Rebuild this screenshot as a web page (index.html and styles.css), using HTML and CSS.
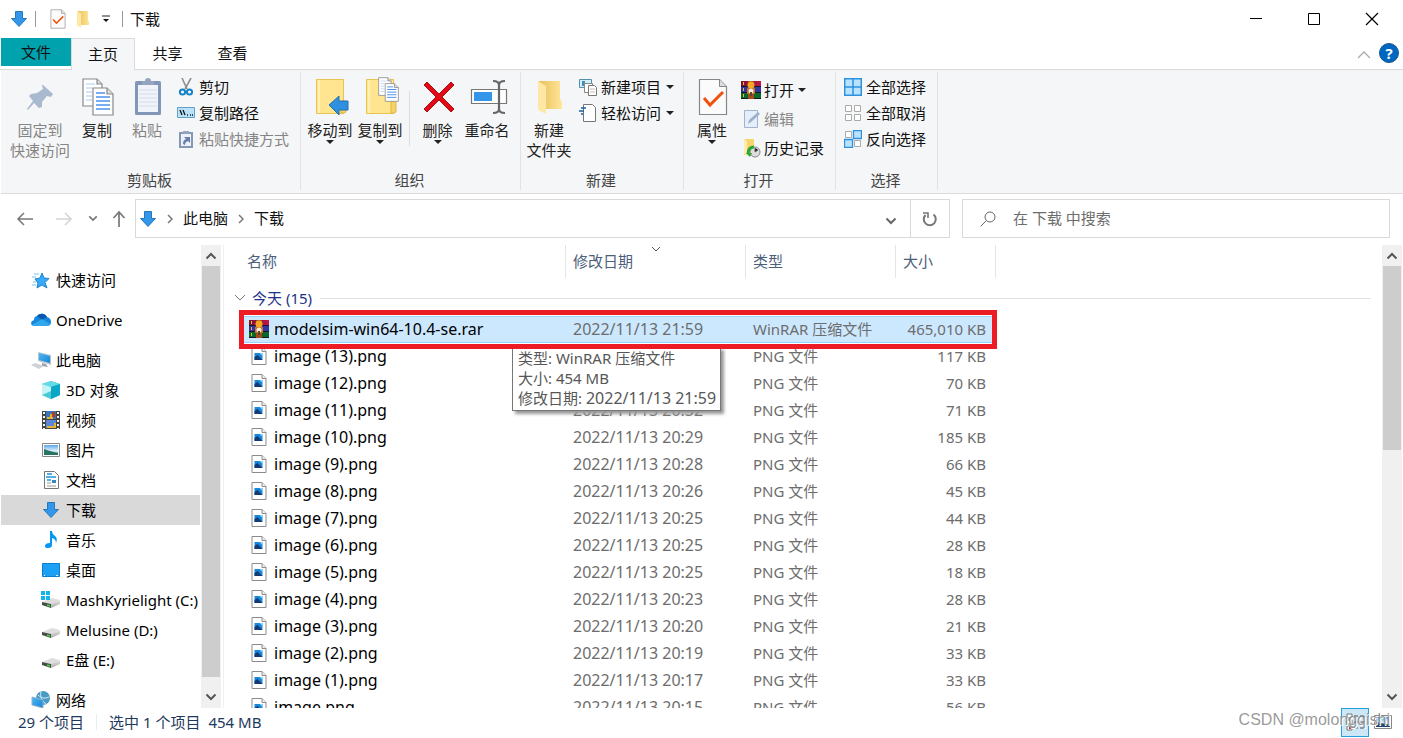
FILE: index.html
```html
<!DOCTYPE html>
<html lang="zh-CN">
<head>
<meta charset="utf-8">
<title>下载</title>
<link rel="stylesheet" href="styles.css">
</head>
<body>
<svg class="defs" aria-hidden="true">
  <defs>
    <linearGradient id="gold" x1="0" x2="1"><stop offset="0" stop-color="#e8c05a"/><stop offset="1" stop-color="#ffe699"/></linearGradient>
    <linearGradient id="sky" x1="0" y1="0" x2="1" y2="1"><stop offset="0" stop-color="#4db8f5"/><stop offset="1" stop-color="#1583d8"/></linearGradient>
    <linearGradient id="photo" x1="0" y1="0" x2="0" y2="1"><stop offset="0" stop-color="#5aa5e8"/><stop offset=".6" stop-color="#e3f3fc"/><stop offset="1" stop-color="#2f6f9a"/></linearGradient>
    <linearGradient id="metal" x1="0" x2="0" y1="0" y2="1"><stop offset="0" stop-color="#e5e5e5"/><stop offset="1" stop-color="#a9a9a9"/></linearGradient>
    <linearGradient id="red" x1="0" x2="1"><stop offset="0" stop-color="#7d1230"/><stop offset="1" stop-color="#c01848"/></linearGradient>
  </defs>
  <symbol id="down" viewBox="0 0 18 18"><path d="M5.500 1.500h7v7h4L9 16.500 1.500 8.500h4z" fill="#3396e8" stroke="#2277bd"/></symbol>
  <symbol id="check" viewBox="0 0 30 38"><path d="M1.500 1.500h20l7 7v28h-27z" fill="#fbfbfb" stroke="#878787" stroke-width="1.200"/><path d="M21.500 1.500v7h7" fill="#ddd" stroke="#878787"/><path d="M6 20l6 7L25 14" fill="none" stroke="#f2500d" stroke-width="3"/></symbol>
  <symbol id="folder" viewBox="0 0 26 36"><path d="M2 2h21v18l2 3v7H8z" fill="url(#gold)"/><path d="M1 2l8 5v28l-8-4z" fill="#ffe8a6"/></symbol>
  <symbol id="box" viewBox="0 0 34 38"><path d="M1.500 1.500h27v34h-27z" fill="#ffe590" stroke="#e7c34f"/><path d="M4 2v33" stroke="#fff3c2" stroke-width="1.500"/><path d="M26 35V24q2.500-3 5 0v9q0 2-2 2z" fill="#f6d26a" stroke="#dfb53e"/></symbol>
  <symbol id="pages" viewBox="0 0 32 38"><g fill="#fff" stroke="#888" stroke-width="1.200"><path d="M1 1h14l5 5v22H1z"/><path d="M11 10h14l6 6v21H11z"/><path d="M15 1v5h5M25 10v6h6" fill="#ddd"/></g><path d="M4 6h9M4 10h6M4 14h6M4 18h6M4 22h6" stroke="#a8c8f5"/><path d="M14 15h9M14 19h14M14 23h14M14 27h14M14 31h14" stroke="#4d91ee" stroke-width="1.500"/></symbol>
  <symbol id="clip" viewBox="0 0 28 38"><rect x="1" y="3" width="26" height="34" rx="1.500" fill="#8296b8"/><path d="M4 7h20v27H4z" fill="#f0f4fa"/><path d="M8 3h3a3 3 0 016 0h3v4H8z" fill="#95a5c0"/><path d="M5 12h18M5 16h18M5 20h18M5 24h18M5 28h18" stroke="#d3ddeb"/></symbol>
  <symbol id="rar" viewBox="0 0 20 18"><path d="M0 0h20v6H0z" fill="url(#red)"/><path d="M0 6h20v6H0z" fill="#3037a0"/><path d="M0 12h20v6H0z" fill="#0a672a"/><path d="M0 5.500h20M0 11.500h20M0 17.500h20" stroke="#1c1728"/><path d="M2.500 1v3M2.500 7v3M2.500 13v3" stroke="#f5b92e"/><path d="M7 0h6v18H7z" fill="#a34c19"/><circle cx="10" cy="4" r="3.500" fill="#f5a623"/><path d="M6 7h8v6H6z" fill="#c5732c"/><circle cx="10" cy="10" r="2.500" fill="#f5ecd7"/><path d="M9 11h2v4H9z" fill="#5d422e"/></symbol>
  <symbol id="png" viewBox="0 0 15 18"><path d="M.5.500h10l4 4v13H.500z" fill="#fff" stroke="#8b8b8b"/><path d="M10.500.500v4h4" fill="#eee" stroke="#8b8b8b"/><path d="M3 6h8v7H3z" fill="#1787dc"/><path d="M3 10l3-2 5 5H3z" fill="#123b72"/><path d="M8 6h3v3z" fill="#8bd5fa"/></symbol>
  <symbol id="drive" viewBox="0 0 20 20"><path d="M1 12l10-4 8 2-9 4z" fill="#dedede"/><path d="M1 12l9 2v4l-9-3z" fill="#494949"/><path d="M10 14l9-4v4l-9 4z" fill="url(#metal)"/><path d="M6 15l3 1" stroke="#35e335" stroke-width="1.500"/></symbol>
  <symbol id="up" viewBox="0 0 12 8"><path d="M1.500 6.500L6 2l4.500 4.500" fill="none" stroke="currentColor" stroke-width="2"/></symbol>
  <symbol id="dn" viewBox="0 0 12 8"><path d="M1.500 1.500L6 6l4.500-4.500" fill="none" stroke="currentColor" stroke-width="2"/></symbol>
</svg>

<header class="titlebar">
  <svg class="i18"><use href="#down"/></svg><i class="bar"></i>
  <button class="quick" aria-label="属性"><svg width="16" height="20"><use href="#check"/></svg></button>
  <button class="quick" aria-label="新建文件夹"><svg width="14" height="18"><use href="#folder"/></svg></button>
  <button class="quick" aria-label="自定义快速访问工具栏"><svg width="8" height="8" viewBox="0 0 8 8"><path d="M0 1h8" stroke="#222"/><path d="M1 4h6L4 7z" fill="#111"/></svg></button>
  <i class="bar"></i><h1>下载</h1>
  <div class="window-buttons">
    <button aria-label="最小化"><svg width="14" height="14" viewBox="0 0 14 14"><path d="M1 6.500h12" stroke="#000"/></svg></button>
    <button aria-label="最大化"><svg width="14" height="14" viewBox="0 0 14 14"><path d="M1.500 1.500h11v11h-11z" fill="none" stroke="#000"/></svg></button>
    <button aria-label="关闭"><svg width="14" height="14" viewBox="0 0 14 14"><path d="M1 1l12 12M13 1L1 13" stroke="#000" stroke-width="1.200"/></svg></button>
  </div>
</header>
<nav class="tabs">
  <button class="tab file">文件</button><button class="tab active">主页</button><button class="tab">共享</button><button class="tab">查看</button>
  <div class="help">
    <button aria-label="折叠功能区"><svg width="14" height="9" viewBox="0 0 14 9"><path d="M1 8l6-6 6 6" fill="none" stroke="#aaa" stroke-width="1.300"/></svg></button>
    <button class="question">?</button>
  </div>
</nav>
<section class="ribbon">
  <div class="group clipboard"><div class="tools">
    <button class="big pin off"><svg width="30" height="40" viewBox="0 0 30 40"><path d="M17 8l10 9-2 3-4-1-5 6v5l-3 1-5-5-6 7-1-1 6-8-4-5 2-2 6-1 6-4-1-4z" fill="#a9b9d0"/></svg><span>固定到<br>快速访问</span></button>
    <button class="big mid"><svg width="32" height="40"><use href="#pages"/></svg><span>复制</span></button>
    <button class="big mid off"><svg width="28" height="40"><use href="#clip"/></svg><span>粘贴</span></button>
    <div class="small">
      <button><svg class="i18" viewBox="0 0 18 18"><path d="M5 0l5 11M14 0L8 11" stroke="#8a8f94" stroke-width="1.600"/><circle cx="5.500" cy="14" r="2.600" fill="none" stroke="#1682c5" stroke-width="2"/><circle cx="12.500" cy="14" r="2.600" fill="none" stroke="#1682c5" stroke-width="2"/></svg>剪切</button>
      <button><svg class="i18" viewBox="0 0 18 18"><path d="M.5 3.500h17v10H.500z" fill="#b9e3fb" stroke="#649ec2"/><path d="M3 6l2 5M6 6l2 5M10 11h1M13 11h1M15 11h1" stroke="#111" stroke-width="1.300"/></svg>复制路径</button>
      <button class="off"><svg class="i18" viewBox="0 0 18 18"><path d="M3 3h12v14H3z" fill="#eef2f8" stroke="#8397b7" stroke-width="2"/><path d="M6 1h6v3H6z" fill="#95a5c0"/><path d="M6 14q0-4 3-5L7 7h6v6l-2-2q-3 1-3 4z" fill="#667fae"/></svg>粘贴快捷方式</button>
    </div></div><h2>剪贴板</h2></div>
  <div class="group organize"><div class="tools">
    <button class="big mid"><svg width="34" height="40" viewBox="0 0 34 40"><use href="#box" width="34" height="38" y="1"/><path d="M14 28l10-9v5h9v9h-9v5z" fill="#2f90df" stroke="#2170b0"/></svg><span>移动到</span><b></b></button>
    <button class="big mid"><svg width="34" height="40" viewBox="0 0 34 40"><use href="#box" width="34" height="38" y="1"/><use href="#pages" x="13" width="21" height="25"/></svg><span>复制到</span><b></b></button>
    <i class="split"></i>
    <button class="big delete"><svg width="34" height="40" viewBox="0 0 34 40"><path d="M2 8l3-3 12 12L29 5l3 3-12 12 12 12-3 3-12-12L5 35l-3-3 12-12z" fill="#e30b13" stroke="#a6131b"/></svg><span>删除</span><b></b></button>
    <button class="big mid"><svg width="38" height="40" viewBox="0 0 38 40"><path d="M1.500 12.500h35v14h-35z" fill="#fff" stroke="#777" stroke-width="1.200"/><path d="M4 15h18v9H4z" fill="#3396e8"/><path d="M23 4q6 0 6 4 0-4 6-4M29 7v26M23 36q6 0 6-4 0 4 6 4" fill="none" stroke="#666" stroke-width="2.200"/></svg><span>重命名</span></button>
  </div><h2>组织</h2></div>
  <div class="group new"><div class="tools">
    <button class="big mid"><svg width="26" height="40"><use href="#folder"/></svg><span>新建<br>文件夹</span></button>
    <div class="small"><button><svg class="i18" viewBox="0 0 18 18"><path d="M.5 1.500h12v8H.500z" fill="#d4eefa" stroke="#568fae"/><path d="M3 3h3v5H3z" fill="#448eb5"/><path d="M5.500 5.500h8v9h-8z" fill="#fff" stroke="#888"/><path d="M9.500 7.500h6l2 2v8h-8z" fill="#fff" stroke="#777"/><path d="M11 11h5M11 14h5" stroke="#d2b7b7"/></svg>新建项目<b></b></button><button><svg class="i18" viewBox="0 0 18 18"><path d="M4.500.500h9l3 3v14h-12z" fill="#fff" stroke="#777"/><path d="M2 4h5M0 7h5M2 10h2" stroke="#185f9e" stroke-width="1.300"/></svg>轻松访问<b></b></button></div>
  </div><h2>新建</h2></div>
  <div class="group open"><div class="tools">
    <button class="big mid"><svg width="30" height="40"><use href="#check"/></svg><span>属性</span><b></b></button>
    <div class="small wide"><button><svg width="20" height="18"><use href="#rar"/></svg>打开<b></b></button><button class="off"><svg width="20" height="18" viewBox="0 0 20 18"><path d="M3.500.500h13v17h-13z" fill="#e5eefb" stroke="#a1b2cd"/><path d="M7 14l1-4 9-8 2 2-9 8z" fill="#9fb0cb"/></svg>编辑</button><button><svg width="20" height="20" viewBox="0 0 20 20"><path d="M3 1h10v16H3z" fill="#f7d56e"/><path d="M3 1l3 2v15l-3-2z" fill="#ffebac"/><circle cx="14" cy="14" r="5" fill="#ddd" stroke="#888"/><path d="M14 10v4l3-2" stroke="#666"/><path d="M7 16q0-7 6-7" fill="none" stroke="#30a438" stroke-width="3"/><path d="M5 15h6l-2 4z" fill="#30a438"/></svg>历史记录</button></div>
  </div><h2>打开</h2></div>
  <div class="group select"><div class="tools"><div class="small">
    <button><svg class="i18" viewBox="0 0 18 18"><path d="M.7.700h16.600v16.600H.700zM9 0v18M0 9h18" fill="#b9e2ff" stroke="#2d91df" stroke-width="1.500"/></svg>全部选择</button>
    <button><svg class="i18" viewBox="0 0 18 18"><path d="M1.500 1.500h6v6h-6zM10.500 1.500h6v6h-6zM1.500 10.500h6v6h-6zM10.500 10.500h6v6h-6z" fill="#fff" stroke="#aaa"/></svg>全部取消</button>
    <button><svg class="i18" viewBox="0 0 18 18"><path d="M1.500 1.500h6v6h-6zM10.500 10.500h6v6h-6z" fill="#fff" stroke="#aaa"/><path d="M9.500.500h8v8h-8zM.5 9.500h8v8H.500z" fill="#b9e2ff" stroke="#2d91df" stroke-width="1.300"/></svg>反向选择</button>
  </div></div><h2>选择</h2></div>
</section>

<section class="navigation">
  <div class="arrows">
    <button class="back" aria-label="后退"><svg width="18" height="16" viewBox="0 0 18 16"><path d="M2 8h15M8 2L2 8l6 6" fill="none" stroke="#777" stroke-width="1.500"/></svg></button>
    <button class="forward" aria-label="前进"><svg width="18" height="16" viewBox="0 0 18 16"><path d="M1 8h15M10 2l6 6-6 6" fill="none" stroke="#d4d4d4" stroke-width="1.500"/></svg></button>
    <button class="recent" aria-label="最近位置"><svg width="10" height="7"><use href="#dn"/></svg></button>
    <button class="parent" aria-label="上移"><svg width="14" height="18" viewBox="0 0 14 18"><path d="M7 17V2M1.500 8L7 2l5.500 6" fill="none" stroke="#777" stroke-width="1.700"/></svg></button>
  </div>
  <div class="address">
    <svg class="i18"><use href="#down"/></svg><svg class="crumb" viewBox="0 0 6 10"><path d="M1 1l4 4-4 4" fill="none" stroke="#777" stroke-width="1.500"/></svg><a href="#pc">此电脑</a><svg class="crumb" viewBox="0 0 6 10"><path d="M1 1l4 4-4 4" fill="none" stroke="#777" stroke-width="1.500"/></svg><a href="#downloads">下载</a>
    <button class="expand" aria-label="展开地址"><svg width="12" height="8"><use href="#dn"/></svg></button>
    <button class="refresh" aria-label="刷新"><svg width="16" height="16" viewBox="0 0 16 16"><path d="M11.500 3.500A6 6 0 113.500 4" fill="none" stroke="#777" stroke-width="2"/><path d="M1 2h5v5" fill="none" stroke="#777" stroke-width="1.600"/></svg></button>
  </div>
  <label class="search"><svg width="16" height="16" viewBox="0 0 16 16"><circle cx="10" cy="6" r="5" fill="none" stroke="#666"/><path d="M6.500 9.500L.7 15.300" stroke="#666"/></svg><input type="text" placeholder="在 下载 中搜索" aria-label="在 下载 中搜索"></label>
</section>

<div class="content">
  <nav class="tree">
    <a href="#quick" class="root"><svg width="20" height="20" viewBox="0 0 20 20"><path d="M11 3l2 5 5 .5-4 4 2 5.500-5-3-5 3 1-5-3-4 5-1z" fill="#35aafb" stroke="#1b84c9"/><path d="M3 4h5M1 7h4M2 12h3M1 15h4" stroke="#76bfea"/></svg>快速访问</a>
    <a href="#onedrive" class="root"><svg width="20" height="20" viewBox="0 0 20 20"><path d="M3 10a4 4 0 013-4 6 6 0 0110 1q4 1 4 5t-4 4H4q-4 0-4-3 0-2 3-3z" fill="#1588dc"/><path d="M6 6a6 6 0 0110 1l-5 3z" fill="#0c58ac"/><path d="M1 15l10-6 8 5q-1 2-4 2H4q-2 0-3-1z" fill="#31a7ee"/></svg>OneDrive</a>
    <a href="#pc" class="root"><svg width="20" height="20" viewBox="0 0 20 20"><path d="M7 2l13 3v10L7 11z" fill="#b9c4cb"/><path d="M8 3l11 3v7L8 10z" fill="url(#sky)"/><path d="M11 13l4 1 2 3-6-1z" fill="#9aa3a9"/><path d="M0 15l4-2 9 3-5 3z" fill="#cfd3d6"/></svg>此电脑</a>
    <a href="#3d"><svg width="20" height="20" viewBox="0 0 20 20"><path d="M1 4l9-3 9 3v11l-9 4-9-4z" fill="#26b9d3"/><path d="M1 4l9-3 9 3-9 3z" fill="#64dae6"/><path d="M1 4l9 3v12l-9-4z" fill="#c6f3f6"/><path d="M1 15l9-4v8z" fill="#48cbd7"/><path d="M10 7l9-3v11l-9 4z" fill="#0aa8c6"/></svg>3D 对象</a>
    <a href="#video"><svg width="20" height="20" viewBox="0 0 20 20"><path d="M1 1h18v18H1z" fill="#444"/><path d="M5 1h10v8H5z" fill="#3875bd"/><path d="M5 10h10v8H5z" fill="#5a88d7"/><path d="M6 7h3V4h5v3h-2v2H6M6 16h7v-3h2v5H6" fill="#e6b633"/><path d="M3 2v17M17 2v17" stroke="#f4f4f4" stroke-width="2" stroke-dasharray="2 2"/><path d="M11 2h3v5h-3" fill="#b23c24"/></svg>视频</a>
    <a href="#pictures"><svg width="20" height="20" viewBox="0 0 20 20"><path d="M1.500 3.500h17v13h-17z" fill="#fff" stroke="#888"/><path d="M3 5h14v10H3z" fill="url(#photo)"/><path d="M3 9q5 2 14 4v2H3z" fill="#267463"/></svg>图片</a>
    <a href="#docs"><svg width="20" height="20" viewBox="0 0 20 20"><path d="M3.500 1.500h10l4 4v13h-14z" fill="#fff" stroke="#777"/><path d="M6 4h5M5 7h10M6 10h4" stroke="#1c97df" stroke-width="1.500"/><path d="M6 13h4M6 16h9" stroke="#999"/><path d="M11 10h4v3h-4z" fill="#3a85be"/></svg>文档</a>
    <a href="#downloads" class="current"><svg width="20" height="18"><use href="#down"/></svg>下载</a>
    <a href="#music"><svg width="20" height="20" viewBox="0 0 20 20"><path d="M9 1h2q0 3 3 5t1 7q0-4-4-5v7q0 3-4 3-3 0-3-2 0-3 5-3z" fill="#0697f3"/></svg>音乐</a>
    <a href="#desktop"><svg width="20" height="20" viewBox="0 0 20 20"><path d="M1.500 3.500h17v13h-17z" fill="#1ca0f6" stroke="#0c7ecb"/><path d="M3 15.500h1M15 15.500h2" stroke="#fff"/></svg>桌面</a>
    <a href="#c"><svg width="20" height="20"><use href="#drive"/><path d="M0 1h4v4H0zM5 1h4v4H5zM0 6h4v4H0zM5 6h4v4H5z" fill="#13b3ec"/></svg>MashKyrielight (C:)</a>
    <a href="#d"><svg width="20" height="20"><use href="#drive"/></svg>Melusine (D:)</a>
    <a href="#e"><svg width="20" height="20"><use href="#drive"/></svg>E盘 (E:)</a>
    <a href="#network" class="root"><svg width="20" height="20" viewBox="0 0 20 20"><circle cx="12" cy="8" r="7" fill="#4b9ac5"/><path d="M7 5q5 5 11 2M10 1q-2 8 5 13" stroke="#cbe9f5" fill="none"/><path d="M1 7l11 3v8L1 15z" fill="url(#sky)" stroke="#8fb1c8"/></svg>网络</a>
  </nav>
  <div class="scroll"><svg width="12" height="8"><use href="#up"/></svg><i class="tree-thumb"></i><svg width="12" height="8"><use href="#dn"/></svg></div>
  <main>
    <table>
      <colgroup><col class="c-name"><col class="c-date"><col class="c-type"><col class="c-size"><col></colgroup>
      <thead><tr><th>名称</th><th>修改日期<svg class="sort" width="10" height="6" viewBox="0 0 10 6"><path d="M1 1l4 4 4-4" fill="none" stroke="#555"/></svg></th><th>类型</th><th>大小</th><th></th></tr></thead>
      <tbody>
      <tr><th colspan="5" class="date-group"><div><svg width="12" height="8" viewBox="0 0 12 8"><path d="M1 1l5 5 5-5" fill="none" stroke="#777"/></svg>今天 (15)<i></i></div></th></tr>
      <tr class="selected"><td><svg width="20" height="18"><use href="#rar"/></svg>modelsim-win64-10.4-se.rar</td><td>2022/11/13 21:59</td><td>WinRAR 压缩文件</td><td>465,010 KB</td></tr>
      <tr><td><svg width="20" height="18"><use href="#png"/></svg>image (13).png</td><td></td><td>PNG 文件</td><td>117 KB</td></tr>
      <tr><td><svg width="20" height="18"><use href="#png"/></svg>image (12).png</td><td></td><td>PNG 文件</td><td>70 KB</td></tr>
      <tr><td><svg width="20" height="18"><use href="#png"/></svg>image (11).png</td><td>2022/11/13 20:32</td><td>PNG 文件</td><td>71 KB</td></tr>
      <tr><td><svg width="20" height="18"><use href="#png"/></svg>image (10).png</td><td>2022/11/13 20:29</td><td>PNG 文件</td><td>185 KB</td></tr>
      <tr><td><svg width="20" height="18"><use href="#png"/></svg>image (9).png</td><td>2022/11/13 20:28</td><td>PNG 文件</td><td>66 KB</td></tr>
      <tr><td><svg width="20" height="18"><use href="#png"/></svg>image (8).png</td><td>2022/11/13 20:26</td><td>PNG 文件</td><td>45 KB</td></tr>
      <tr><td><svg width="20" height="18"><use href="#png"/></svg>image (7).png</td><td>2022/11/13 20:25</td><td>PNG 文件</td><td>44 KB</td></tr>
      <tr><td><svg width="20" height="18"><use href="#png"/></svg>image (6).png</td><td>2022/11/13 20:25</td><td>PNG 文件</td><td>28 KB</td></tr>
      <tr><td><svg width="20" height="18"><use href="#png"/></svg>image (5).png</td><td>2022/11/13 20:25</td><td>PNG 文件</td><td>18 KB</td></tr>
      <tr><td><svg width="20" height="18"><use href="#png"/></svg>image (4).png</td><td>2022/11/13 20:23</td><td>PNG 文件</td><td>28 KB</td></tr>
      <tr><td><svg width="20" height="18"><use href="#png"/></svg>image (3).png</td><td>2022/11/13 20:20</td><td>PNG 文件</td><td>21 KB</td></tr>
      <tr><td><svg width="20" height="18"><use href="#png"/></svg>image (2).png</td><td>2022/11/13 20:19</td><td>PNG 文件</td><td>33 KB</td></tr>
      <tr><td><svg width="20" height="18"><use href="#png"/></svg>image (1).png</td><td>2022/11/13 20:17</td><td>PNG 文件</td><td>33 KB</td></tr>
      <tr><td><svg width="20" height="18"><use href="#png"/></svg>image.png</td><td>2022/11/13 20:15</td><td>PNG 文件</td><td>56 KB</td></tr>
      </tbody>
    </table>
    <div class="tooltip" role="tooltip"><p>类型: WinRAR 压缩文件</p><p>大小: 454 MB</p><p>修改日期: <span>2022/11/13 21:59</span></p></div>
    <div class="highlight"></div>
  </main>
  <div class="scroll"><svg width="12" height="8"><use href="#up"/></svg><i class="main-thumb"></i><svg width="12" height="8"><use href="#dn"/></svg></div>
</div>
<footer>
  <span>29 个项目</span><i></i><span>选中 1 个项目</span><span class="bytes">454 MB</span>
  <div class="views"><button class="details" aria-label="详细信息"><svg width="18" height="18" viewBox="0 0 18 18"><path d="M1 1h5v4H1zM1 7h5v4H1zM1 13h5v4H1z" fill="#fff" stroke="#777"/><path d="M8 3h4M14 3h4M8 9h4M14 9h4M8 15h4M14 15h4" stroke="#555"/><path d="M3 14h2v2H3z" fill="#c33"/></svg></button><button aria-label="缩略图"><svg width="18" height="14" viewBox="0 0 18 14"><path d="M.5.500h17v13H.500z" fill="#fff" stroke="#888"/><path d="M2 2h14v10H2z" fill="url(#photo)"/><path d="M2 7q5 1 14 3v2H2z" fill="#21466e"/></svg></button></div>
  <div class="watermark">CSDN @molongqishi</div>
</footer>
</body>
</html>
```
FILE: styles.css
```css
* { box-sizing: border-box; }
body { margin: 0; height: 100vh; display: flex; flex-direction: column; overflow: hidden; background: #fff; color: #111; font: 15px/20px "Noto Sans", "Noto Sans CJK SC", sans-serif; }
button { border: 0; padding: 0; margin: 0; background: none; font: inherit; color: inherit; }
svg { flex: none; }
a { color: inherit; text-decoration: none; }
h1, h2, p { margin: 0; font: inherit; }
.defs { position: absolute; width: 0; height: 0; }
.i18 { width: 18px; height: 18px; }

.titlebar { height: 38px; display: flex; align-items: center; padding-left: 10px; flex: none; }
.bar { width: 1px; height: 16px; background: #999; margin: 0 7px; }
.quick { width: 26px; display: flex; justify-content: center; }
.quick + .quick { width: 24px; }
.quick + .quick + .quick { width: 21px; }
.bar + .quick { margin-left: 2px; }
.window-buttons { margin-left: auto; display: flex; padding-right: 2px; }
.window-buttons button { width: 58px; height: 36px; display: flex; align-items: center; justify-content: center; }
.titlebar .quick + .bar { margin: 0 7px 0 6px; }

.tabs { height: 32px; display: flex; flex: none; padding-left: 1px; background: linear-gradient(#dadbdc, #dadbdc) bottom / 100% 1px no-repeat; }
.tab { width: 65px; padding-bottom: 2px; }
.file { width: 70px; height: 28px; padding: 0; background: #00a2ad; }
.active { width: 64px; height: 32px; background: #f5f6f7; border: 1px solid #dadbdc; border-bottom: 0; }
.help { margin-left: auto; display: flex; align-items: center; gap: 8px; padding: 0 4px 2px 0; }
.question { width: 20px; height: 20px; border-radius: 50%; background: #0067c0; color: #fff; border: 1px solid #17568b; line-height: 16px; font-weight: 700; }

.ribbon { height: 124px; flex: none; display: flex; margin-left: 1px; background: #f5f6f7; border-bottom: 1px solid #dadbdc; padding: 2px 0 3px; }
.group { border-right: 1px solid #e1e2e3; display: flex; flex-direction: column; }
.group h2 { text-align: center; color: #444; padding-right: 2px; }
.tools { flex: 1; display: flex; align-items: flex-start; }
.big { display: flex; flex-direction: column; align-items: center; padding-top: 5px; width: 50px; color: #222; white-space: nowrap; }
.big svg { margin: 0 0 3px 2px; }
.ribbon b { border: 4px solid transparent; border-top-color: #222; border-bottom: 0; }
.small b { margin-left: 1px; }
.off, .big.off { color: #858585; }
.small { display: flex; flex-direction: column; padding-top: 2px; }
.small button { height: 26px; display: flex; align-items: center; gap: 4px; white-space: nowrap; }
.small.wide button { height: 29px; gap: 3px; }
.clipboard { width: 300px; }
.organize { width: 220px; }
.organize .tools { padding-left: 4px; }
.organize .big svg { margin-left: 4px; }
.organize .delete svg { margin-left: 2px; }
.new { width: 163px; }
.open { width: 152px; }
.select { width: 102px; }
.pin { width: 71px; padding-left: 7px; }
.clipboard .small { margin-left: 5px; }
.split { width: 1px; height: 55px; margin: 19px 3px 0 4px; background: #dcdddf; }
.delete { width: 49px; }
.new .big, .open .big { width: 56px; }
.new .small { margin-left: 2px; }
.open .small { margin-left: 1px; padding-top: 3px; }
.select .small { padding-left: 8px; }

.navigation { height: 51px; flex: none; display: flex; align-items: center; padding: 0 13px 2px 0; }
.arrows { width: 135px; flex: none; display: flex; align-items: center; color: #777; padding-left: 6px; }
.arrows button { display: flex; justify-content: center; }
.arrows .back { width: 38px; }
.arrows .forward { width: 40px; }
.arrows .recent { width: 18px; }
.arrows .parent { width: 33px; }
.address { flex: 1 1 0; height: 39px; border: 1px solid #d9d9d9; display: flex; align-items: center; padding-left: 3px; }
.address a { padding-bottom: 1px; }
.crumb { width: 6px; height: 10px; margin: 0 10px; }
.expand { margin-left: auto; width: 38px; color: #666; }
.refresh { width: 39px; height: 37px; border-left: 1px solid #d9d9d9; display: flex; align-items: center; justify-content: center; }
.search { flex: 0 1 428px; height: 39px; margin-left: 12px; border: 1px solid #d9d9d9; display: flex; align-items: center; padding-left: 17px; gap: 17px; }
.search input { border: 0; padding: 0 0 2px; outline: 0; flex: 1; min-width: 0; font: inherit; background: none; }
.search input::placeholder { color: #6d6d6d; opacity: 1; }

.content { flex: 1; min-height: 0; display: flex; padding-right: 1px; }
.tree { width: 200px; flex: none; padding: 20px 0 0 1px; overflow: hidden; }
.tree a { display: flex; align-items: center; height: 30px; padding-left: 40px; gap: 5px; white-space: nowrap; color: #000; }
.tree .root { padding-left: 30px; }
.tree .root:not(:last-child) { margin-bottom: 10px; }
.tree .root:nth-child(3) { margin-bottom: 0; }
.tree .root:last-child { margin-top: 10px; }
.tree .current { background: #d9d9d9; }
.scroll { width: 20px; flex: none; background: #f0f0f0; color: #555; display: flex; flex-direction: column; align-items: center; padding: 7px 0; margin-left: 1px; }
.scroll i { width: 18px; background: #cdcdcd; margin-top: 6px; }
.tree-thumb { flex: 1; margin-bottom: 16px; }
.main-thumb { height: 41%; }
.scroll svg:last-child { margin-top: auto; }
main { flex: 1; position: relative; overflow: hidden; margin-left: 2px; border-left: 1px solid #f0f0f0; padding: 0 10px 0 20px; }
table { width: 100%; table-layout: fixed; border-collapse: separate; border-spacing: 0; }
.c-name { width: 322px; }
.c-date { width: 180px; }
.c-type { width: 150px; }
.c-size { width: 100px; }
th { text-align: left; font-weight: 400; }
thead th { position: relative; height: 33px; padding: 0 0 2px 7px; color: #4c607a; border-right: 1px solid #e5e5e5; }
thead th:first-child { padding-left: 3px; }
thead th:last-child { border: 0; }
.sort { position: absolute; left: 50%; top: 1px; margin-left: -5px; }
.date-group { height: 38px; padding: 2px 0 0; color: #1e3287; }
.date-group div { display: flex; align-items: center; gap: 6px; margin-left: -10px; }
.date-group i { flex: 1; height: 1px; background: #e2e2e2; margin-left: 2px; }
td { height: 27px; padding: 0 0 2px 7px; color: #6d6d6d; white-space: nowrap; }
td:first-child { display: flex; align-items: center; gap: 5px; padding-left: 5px; color: #000; }
td:first-child, td:nth-child(2), .tooltip span { font-size: 16px; }
td:nth-child(4) { text-align: right; padding-right: 10px; }
.selected td { background: #cce8ff; border: solid #99d1ff; border-width: 1px 0; }
.highlight { position: absolute; left: 15px; top: 65px; width: 758px; height: 39px; border: 5px solid #ed1c24; }
.tooltip { position: absolute; left: 288px; top: 102px; width: 209px; padding: 0 5px 2px; background: #fff; border: 1px solid #767676; box-shadow: 3px 3px 3px #999; color: #575757; white-space: nowrap; }
footer { height: 30px; flex: none; display: flex; align-items: center; padding: 0 6px 2px 18px; color: #1e395b; position: relative; }
footer i { width: 1px; height: 16px; background: #e8edf2; margin: 0 12px; }
.bytes { margin-left: 8px; }
.views { margin-left: auto; display: flex; height: 29px; }
.views button { width: 28px; display: flex; align-items: center; justify-content: center; }
.views .details { background: #cce8f6; border: 1px solid #26a0da; }
.watermark { position: absolute; right: 13px; bottom: 8px; font-family: "Liberation Sans", sans-serif; font-size: 16px; color: #808080cc; text-shadow: 1px 1px 0 #fff; }
```
